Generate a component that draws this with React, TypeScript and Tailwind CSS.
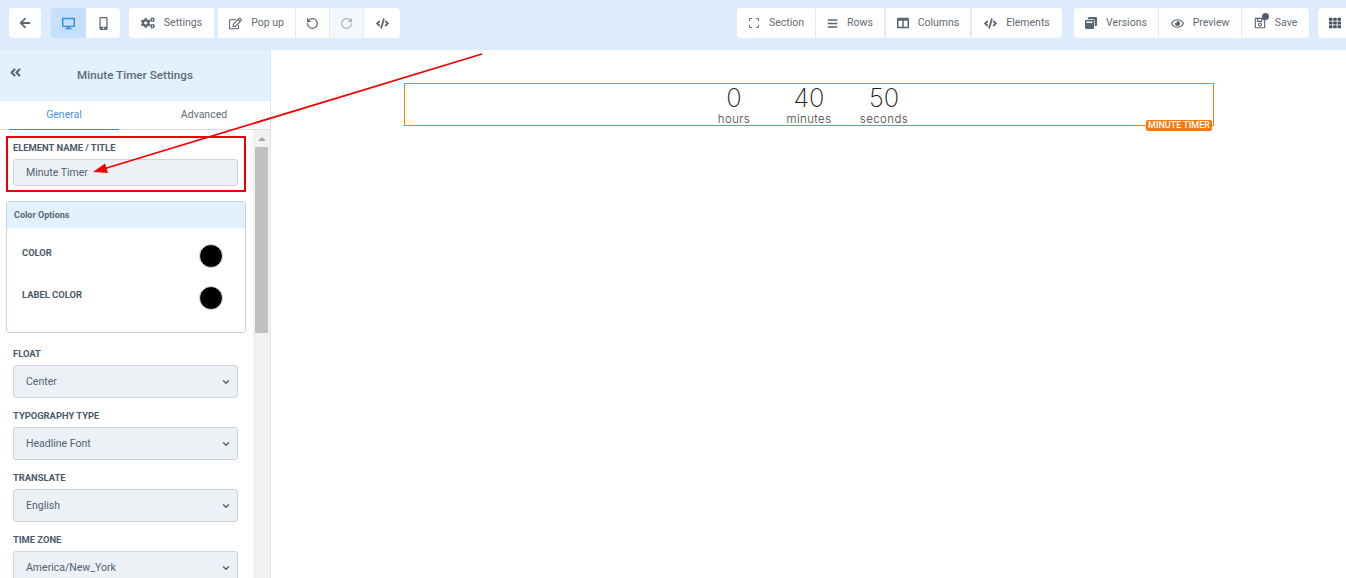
import { ChevronDown, RotateCcw, RotateCw, Scan } from 'lucide-react';
import { FaAngleDoubleLeft, FaArrowLeft, FaBars, FaCode, FaCogs, FaColumns, FaDesktop, FaMobileAlt, FaRegEdit, FaRegEye, FaRegSave, FaTh, FaWindowRestore } from 'react-icons/fa';
import type { ReactNode } from 'react';

function ToolBtn({ icon, label, w, className = '' }: { icon: ReactNode; label?: string; w: string; className?: string }) {
  return (
    <div className={`h-[30px] shrink-0 ${w} bg-white flex items-center justify-center gap-[9px] text-[10.5px] text-[#5f6b76] ${className}`}>
      {icon}
      {label && <span>{label}</span>}
    </div>
  );
}

function Field({ label, value, mt }: { label: string; value: string; mt: string }) {
  return (
    <div className={mt}>
      <div className="text-[9.4px] leading-[11px] font-bold text-[#4a5a6a]">{label}</div>
      <div className="mt-[6px] h-[33px] w-[225px] rounded-[3px] bg-[#edf1f5] border border-[#ccd5de] pl-[12px] pr-[6px] flex items-center justify-between text-[10.5px] text-[#4f6072]">
        <span>{value}</span>
        <ChevronDown size={10} strokeWidth={3} className="text-[#4f5a66]" />
      </div>
    </div>
  );
}

function ColorRow({ label }: { label: string }) {
  return (
    <div className="flex justify-between pl-[15px] pr-[22px] h-[42px]">
      <span className="text-[9.4px] font-bold text-[#4a5a6a] leading-[12px]">{label}</span>
      <span className="w-[24px] h-[24px] -mt-[3px] rounded-full bg-black border border-[#e3e3e3]" />
    </div>
  );
}

function Unit({ n, label, w }: { n: string; label: string; w: string }) {
  return (
    <div className={`${w} flex flex-col items-center -mt-[1px]`}>
      <span className="text-[25.5px] leading-[30px] font-extralight text-[#222]">{n}</span>
      <span className="text-[11.5px] leading-[12px] font-light text-[#444] tracking-[0.4px]">{label}</span>
    </div>
  );
}

export default function App() {
  const ic = 'text-[#5b6670]';
  return (
    <div className="relative w-[1346px] h-[578px] overflow-hidden bg-white font-['Roboto',sans-serif]">
      {/* Top toolbar */}
      <div className="h-[50px] bg-[#dcecfd] flex items-start pt-[8px] pl-[9px]">
        <ToolBtn w="w-[32px]" className="rounded-[4px]" icon={<FaArrowLeft size={12} className={ic} />} />
        <div className="ml-[10px] flex">
          <ToolBtn w="w-[35px] !bg-[#c6e0fb]" className="rounded-l-[4px]" icon={<FaDesktop size={13} className="text-[#2d8ae8]" />} />
          <ToolBtn w="w-[34px]" className="rounded-r-[4px]" icon={<FaMobileAlt size={13} className={ic} />} />
        </div>
        <ToolBtn w="w-[85px] ml-[9px]" className="rounded-l-[4px]" label="Settings" icon={<FaCogs size={14} className={ic} />} />
        <ToolBtn w="w-[77px] ml-[4px]" label="Pop up" icon={<FaRegEdit size={13} className={ic} />} />
        <ToolBtn w="w-[33px] ml-[1px]" icon={<RotateCcw size={13} strokeWidth={2.2} className={ic} />} />
        <ToolBtn w="w-[33px] ml-[1px] !bg-[#f2f8fe]" icon={<RotateCw size={13} strokeWidth={2} className="text-[#a5adb5]" />} />
        <ToolBtn w="w-[36px] ml-[1px]" className="rounded-r-[4px]" icon={<FaCode size={13} className={ic} />} />

        <ToolBtn w="w-[78px] ml-[337px]" className="rounded-l-[4px]" label="Section" icon={<Scan size={12} strokeWidth={2.2} className={ic} />} />
        <ToolBtn w="w-[68px] ml-[1px]" label="Rows" icon={<FaBars size={11} className={ic} />} />
        <ToolBtn w="w-[84px] ml-[2px]" label="Columns" icon={<FaColumns size={12} className={ic} />} />
        <ToolBtn w="w-[90px] ml-[2px]" className="rounded-r-[4px]" label="Elements" icon={<FaCode size={13} className={ic} />} />

        <ToolBtn w="w-[84px] ml-[12px]" className="rounded-l-[4px]" label="Versions" icon={<FaWindowRestore size={12} className={ic} />} />
        <ToolBtn w="w-[82px] ml-[1px]" label="Preview" icon={<FaRegEye size={13} className={ic} />} />
        <ToolBtn
          w="w-[67px] ml-[1px]"
          className="rounded-r-[4px]"
          label="Save"
          icon={
            <span className="relative">
              <FaRegSave size={12} className={ic} />
              <span className="absolute -top-[4px] -right-[3px] w-[7px] h-[7px] rounded-full bg-[#51606e]" />
            </span>
          }
        />
        <ToolBtn w="w-[40px] ml-[9px]" className="rounded-l-[4px] !justify-start pl-[11px]" icon={<FaTh size={12} className="text-[#46525e]" />} />
      </div>

      <div className="flex h-[528px]">
        {/* Sidebar */}
        <div className="w-[271px] shrink-0 border-r border-[#e3e6e9] overflow-hidden">
          <div className="h-[51px] bg-[#e3f1fd] relative flex items-center justify-center text-[11.7px] font-medium text-[#5f6b76]">
            <FaAngleDoubleLeft size={13} className="absolute left-[9px] top-[16px] text-[#55626f]" />
            <span>Minute Timer Settings</span>
          </div>
          <div className="flex h-[29px] w-[270px] border-b border-[#dcdcdc] text-[10.5px]">
            <div className="ml-[9px] w-[110px] h-[29px] border-b border-[#2d8ae8] text-center leading-[28px] text-[#4a90f0]">General</div>
            <div className="ml-[30px] w-[110px] text-center leading-[28px] text-[#5f6b76]">Advanced</div>
          </div>
          <div className="flex h-[448px]">
            <div className="w-[253px] shrink-0 overflow-hidden">
              <div className="pl-[13px] pt-[12px]">
                <div className="text-[9.4px] leading-[11px] font-bold text-[#4a5a6a]">ELEMENT NAME / TITLE</div>
                <div className="mt-[6px] h-[27px] w-[225px] rounded-[3px] bg-[#edf1f5] border border-[#ccd5de] pl-[12px] flex items-center text-[10.5px] text-[#4f6072]">Minute Timer</div>
              </div>
              <div className="ml-[6px] mt-[15px] w-[240px] h-[132px] rounded-[3px] border border-[#c6d3e0]">
                <div className="h-[26px] bg-[#e3f1fd] pl-[7px] pt-[2px] flex items-center text-[9px] font-bold text-[#5a6978]">Color Options</div>
                <div className="pt-[19px]">
                  <ColorRow label="COLOR" />
                  <ColorRow label="LABEL COLOR" />
                </div>
              </div>
              <div className="pl-[13px]">
                <Field mt="mt-[15px]" label="FLOAT" value="Center" />
                <Field mt="mt-[12px]" label="TYPOGRAPHY TYPE" value="Headline Font" />
                <Field mt="mt-[12px]" label="TRANSLATE" value="English" />
                <Field mt="mt-[12px]" label="TIME ZONE" value="America/New_York" />
              </div>
            </div>
            {/* Scrollbar */}
            <div className="w-[17px] bg-[#f1f1f1] flex flex-col items-center">
              <div className="h-[17px] flex items-center justify-center">
                <span className="w-0 h-0 border-x-[4px] border-x-transparent border-b-[4px] border-b-[#a3a3a3]" />
              </div>
              <div className="w-[13px] h-[186px] bg-[#c1c1c1]" />
            </div>
          </div>
        </div>

        {/* Canvas */}
        <div className="flex-1 pl-[133px] pt-[33px]">
          <div className="relative w-[810px] h-[43px] border border-[#f27a1a] flex justify-center font-['Inter',sans-serif]">
            <div className="flex w-[300px] justify-center">
              <Unit n="0" label="hours" w="w-[75px]" />
              <Unit n="40" label="minutes" w="w-[75px]" />
              <Unit n="50" label="seconds" w="w-[75px]" />
            </div>
            <span className="absolute right-[1px] top-[36px] h-[11px] px-[2px] rounded-[2px] bg-[#f57a0c] text-white text-[9px] leading-[11px] font-['Roboto',sans-serif] font-medium">MINUTE TIMER</span>
          </div>
        </div>
      </div>

      {/* Red annotation on top of the screenshot */}
      <div className="absolute left-[6px] top-[136px] w-[240px] h-[56px] border-2 border-[#f00000]" />
      <svg className="absolute left-0 top-0 pointer-events-none" width="1346" height="578">
        <line x1="482" y1="54" x2="100" y2="170" stroke="#f00000" strokeWidth="1.8" />
        <polygon points="93,172 105,163.5 108,173" fill="#f00000" />
      </svg>
    </div>
  );
}
